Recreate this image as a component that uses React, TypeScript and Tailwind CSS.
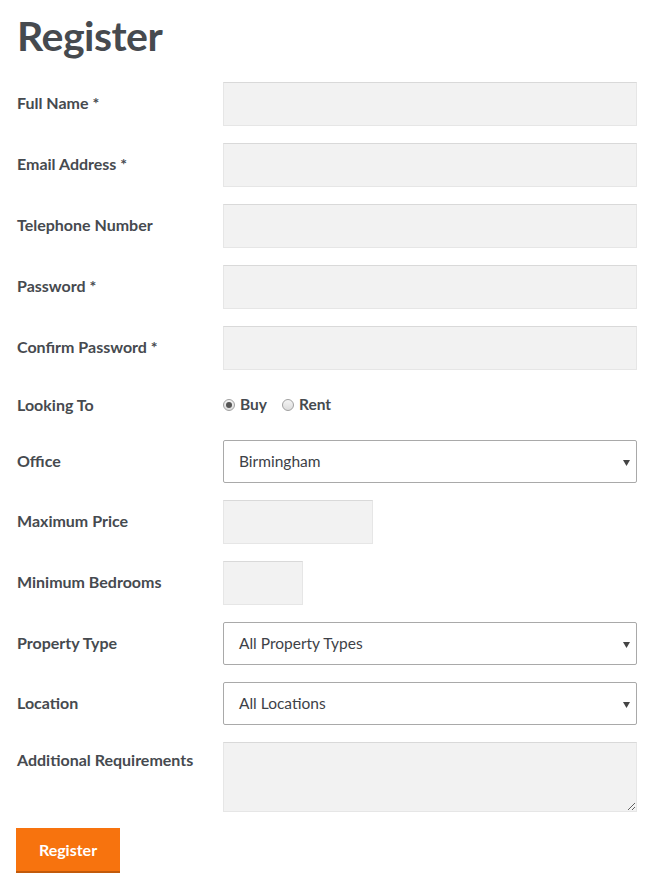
import React from 'react';

const labelCls = 'w-[206px] shrink-0 text-[16px] leading-5 font-bold text-[#464a4f]';
const inputCls =
  'h-[44px] bg-[#f2f2f2] border border-[#e6e6e6] border-t-[#d9d9d9] outline-none';

const Row: React.FC<{ label: string; pad?: string; children: React.ReactNode }> = ({ label, pad = 'pt-[11px]', children }) => (
  <div className="flex items-start">
    <div className={`${labelCls} ${pad}`}>{label}</div>
    {children}
  </div>
);

const Select: React.FC<{ value: string }> = ({ value }) => (
  <div className="relative h-[43px] w-[414px] rounded-[2px] border border-[#a9a9a9] bg-white flex items-center pl-[15px] text-[15.5px] text-[#3d4147]">
    <span>{value}</span>
    <svg className="absolute right-[6px] top-[19px]" width="7" height="6" viewBox="0 0 7 6">
      <path d="M0 0h7L3.5 6z" fill="#444" />
    </svg>
  </div>
);

const Radio: React.FC<{ checked?: boolean; label: string }> = ({ checked, label }) => (
  <label className="flex items-center gap-[5px]">
    <span className="w-[12px] h-[12px] rounded-full border border-[#a0a0a0] bg-gradient-to-b from-[#f4f4f4] to-[#dcdcdc] flex items-center justify-center">
      {checked && <span className="w-[6px] h-[6px] rounded-full bg-[#555]" />}
    </span>
    <span className="text-[15.5px] font-bold text-[#464a4f]">{label}</span>
  </label>
);

const App: React.FC = () => {
  return (
    <div className="min-h-[893px] bg-white px-[17px] pt-[10px]" style={{ fontFamily: 'Lato, "Noto Sans", sans-serif' }}>
      <h1 className="text-[41px] leading-[52px] font-bold text-[#464a4f] tracking-[-0.5px] mb-[20px]">Register</h1>

      <form className="flex flex-col gap-[17px]" onSubmit={(e) => e.preventDefault()}>
        <Row label="Full Name *">
          <input className={`${inputCls} w-[414px]`} />
        </Row>
        <Row label="Email Address *">
          <input className={`${inputCls} w-[414px]`} />
        </Row>
        <Row label="Telephone Number">
          <input className={`${inputCls} w-[414px]`} />
        </Row>
        <Row label="Password *">
          <input type="password" className={`${inputCls} w-[414px]`} />
        </Row>
        <Row label="Confirm Password *">
          <input type="password" className={`${inputCls} w-[414px]`} />
        </Row>

        <div className="flex items-center h-[36px]">
          <div className="w-[206px] shrink-0 text-[16px] font-bold text-[#464a4f]">Looking To</div>
          <div className="flex items-center gap-[15px]">
            <Radio checked label="Buy" />
            <Radio label="Rent" />
          </div>
        </div>

        <Row label="Office">
          <Select value="Birmingham" />
        </Row>
        <Row label="Maximum Price">
          <input className={`${inputCls} w-[150px]`} />
        </Row>
        <Row label="Minimum Bedrooms">
          <input className={`${inputCls} w-[80px]`} />
        </Row>
        <Row label="Property Type">
          <Select value="All Property Types" />
        </Row>
        <Row label="Location">
          <Select value="All Locations" />
        </Row>
        <Row label="Additional Requirements" pad="pt-[8px]">
          <textarea className="h-[70px] w-[414px] bg-[#f2f2f2] border border-[#e6e6e6] border-t-[#d9d9d9] outline-none" />
        </Row>
      </form>

      <button className="mt-[16px] -ml-px h-[45px] w-[104px] bg-[#f7730e] border-b-2 border-[#c25a0b] text-white text-[16px] font-bold">
        Register
      </button>
    </div>
  );
};

export default App;
